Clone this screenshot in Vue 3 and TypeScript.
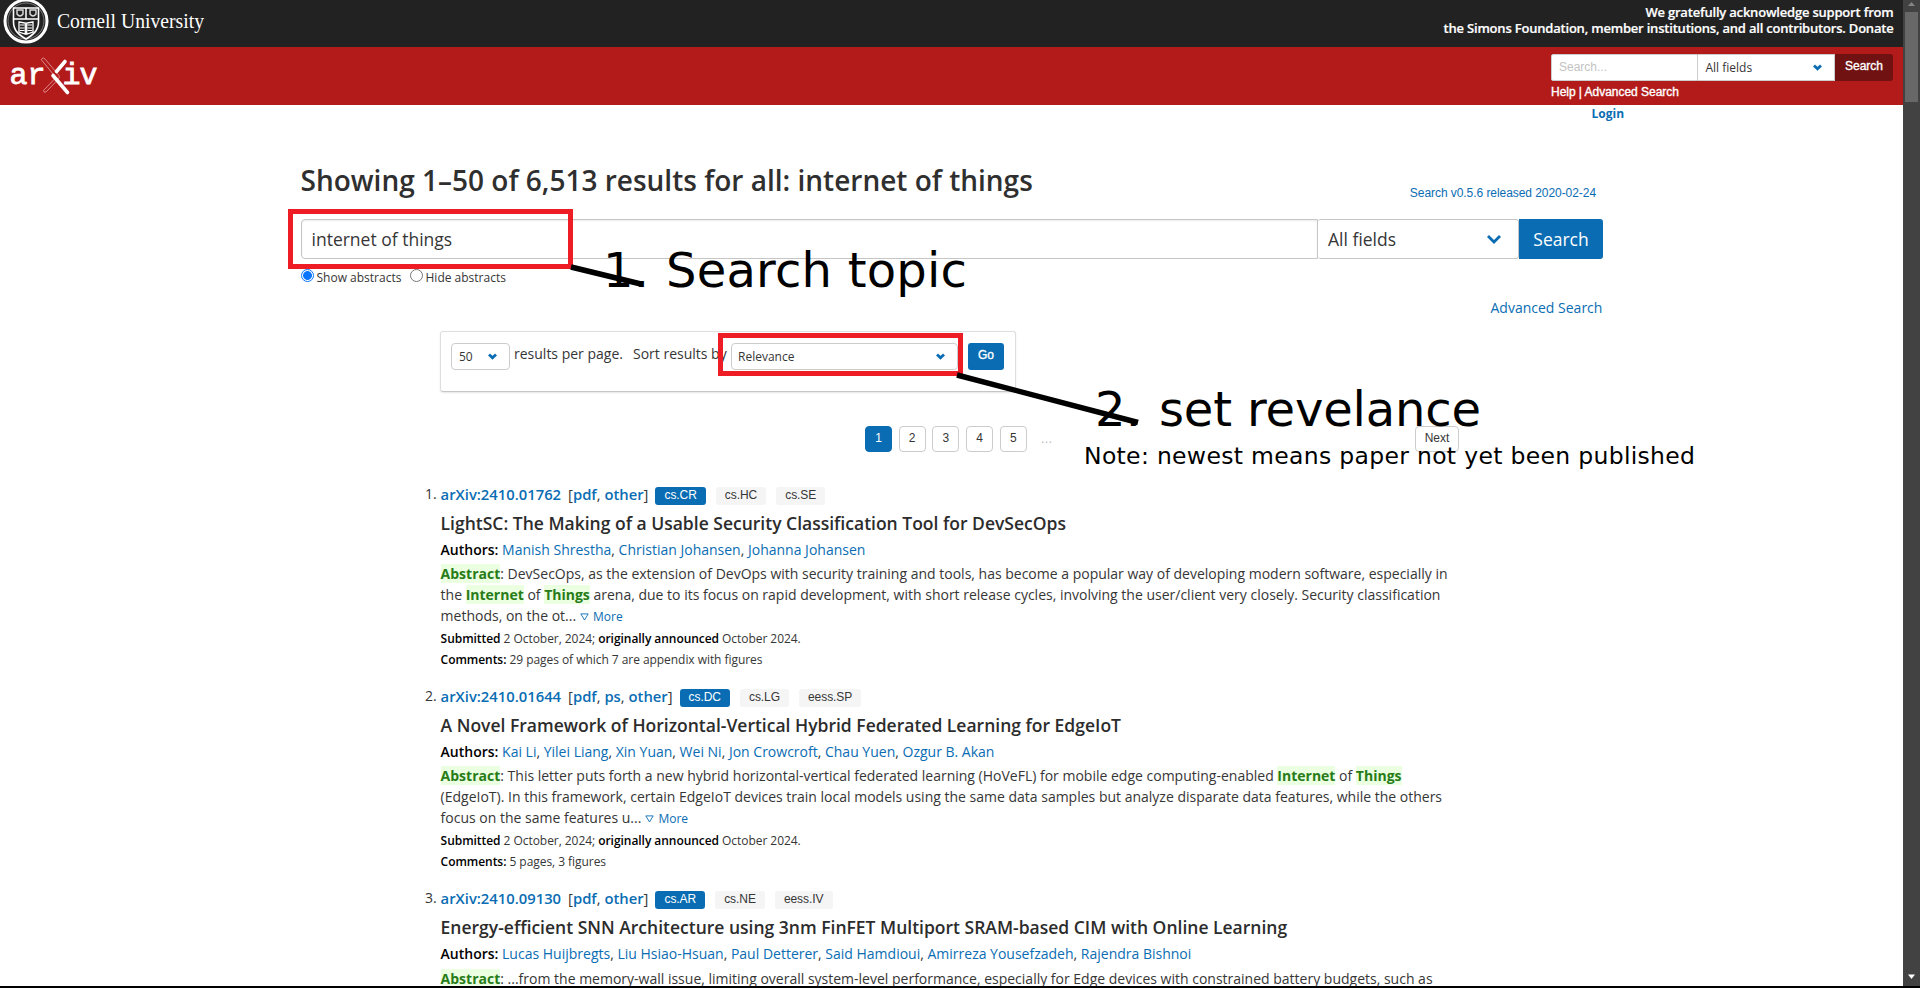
<script setup lang="ts">
interface Paper {
  n: number
  id: string
  links: string[]
  tags: string[]
  title: string
  authors: string[]
  abstract: string[]
  submitted: string
  comments: string
}

const papers: Paper[] = [
  {
    n: 1,
    id: 'arXiv:2410.01762',
    links: ['pdf', 'other'],
    tags: ['cs.CR', 'cs.HC', 'cs.SE'],
    title: 'LightSC: The Making of a Usable Security Classification Tool for DevSecOps',
    authors: ['Manish Shrestha', 'Christian Johansen', 'Johanna Johansen'],
    abstract: [
      'DevSecOps, as the extension of DevOps with security training and tools, has become a popular way of developing modern software, especially in',
      'the *Internet* of *Things* arena, due to its focus on rapid development, with short release cycles, involving the user/client very closely. Security classification',
      'methods, on the ot...',
    ],
    submitted: '2 October, 2024;',
    comments: '29 pages of which 7 are appendix with figures',
  },
  {
    n: 2,
    id: 'arXiv:2410.01644',
    links: ['pdf', 'ps', 'other'],
    tags: ['cs.DC', 'cs.LG', 'eess.SP'],
    title: 'A Novel Framework of Horizontal-Vertical Hybrid Federated Learning for EdgeIoT',
    authors: ['Kai Li', 'Yilei Liang', 'Xin Yuan', 'Wei Ni', 'Jon Crowcroft', 'Chau Yuen', 'Ozgur B. Akan'],
    abstract: [
      'This letter puts forth a new hybrid horizontal-vertical federated learning (HoVeFL) for mobile edge computing-enabled *Internet* of *Things*',
      '(EdgeIoT). In this framework, certain EdgeIoT devices train local models using the same data samples but analyze disparate data features, while the others',
      'focus on the same features u...',
    ],
    submitted: '2 October, 2024;',
    comments: '5 pages, 3 figures',
  },
  {
    n: 3,
    id: 'arXiv:2410.09130',
    links: ['pdf', 'other'],
    tags: ['cs.AR', 'cs.NE', 'eess.IV'],
    title: 'Energy-efficient SNN Architecture using 3nm FinFET Multiport SRAM-based CIM with Online Learning',
    authors: ['Lucas Huijbregts', 'Liu Hsiao-Hsuan', 'Paul Detterer', 'Said Hamdioui', 'Amirreza Yousefzadeh', 'Rajendra Bishnoi'],
    abstract: [
      '...from the memory-wall issue, limiting overall system-level performance, especially for Edge devices with constrained battery budgets, such as',
    ],
    submitted: '',
    comments: '',
  },
]

const pages = ['1', '2', '3', '4', '5']

/* Splits a line on asterisks; odd parts are search hits. */
const parts = (line: string): string[] => line.split('*')
</script>

<template>
  <div class="screen">
    <main class="page">
      <header class="top">
        <div class="cornell">
          <svg class="seal" width="46" height="45" viewBox="0 0 46 45">
            <circle cx="23" cy="21" r="21" fill="none" stroke="#fff" stroke-width="3" />
            <circle cx="23" cy="21" r="18" fill="none" stroke="#777" stroke-width="1" />
            <path d="M10.500 8h25v14c0 9-6 13-12.500 17C16.500 35 10.500 31 10.500 22z" fill="none" stroke="#fff" stroke-width="1.600" />
            <path d="M10.500 19h25M23 8v11" stroke="#fff" stroke-width="1.500" fill="none" />
            <path d="M14 10h6v4q-3 4-6 0zM27 10h6v4q-3 4-6 0z" fill="none" stroke="#ddd" stroke-width="1.400" />
            <path d="M16 22l6.300 1V34l-6.300-2zM30 22l-6.300 1V34l6.300-2z" fill="none" stroke="#fff" stroke-width="1.300" />
            <path d="M17 25h4.500M17 28h4.500M17 30.500h4.500M24.500 25h4.500M24.500 28h4.500M24.500 30.500h4.500" stroke="#fff" stroke-width="1.200" />
          </svg>
          <svg class="wordmark" width="150" height="34" viewBox="0 0 150 34">
            <text x="0" y="24" textLength="147" lengthAdjust="spacingAndGlyphs">Cornell University</text>
          </svg>
        </div>
        <p class="support">We gratefully acknowledge support from<br />the Simons Foundation, member institutions, and all contributors. Donate</p>
      </header>

      <div class="brand">
        <svg class="logo" width="90" height="44" viewBox="0 0 90 44">
          <text x="-.5" y="29" textLength="36" class="mono">ar</text>
          <text x="52.500" y="29" textLength="35" class="mono">iv</text>
          <path d="M32 3.500q1.500-1.500 3 .5L49 20.500q1 2-1 4L36 37q-2.500 1-2.500-1.500L46 22.500 31.500 5q-.5-1 .5-1.500z" fill="none" stroke="#e9a3a3" stroke-width=".8" />
          <path d="M55 6.500L46.500 16.500M43 20.500L57.500 37.500" fill="none" stroke="#fff" stroke-width="3.600" stroke-linecap="round" />
        </svg>
        <div class="mini">
          <div class="mini-row">
            <div class="mini-input">Search...</div>
            <div class="mini-select">All fields
              <svg width="9" height="7" viewBox="0 0 9 7"><path d="M1 1.500l3.500 3.300L8 1.500" /></svg>
            </div>
            <div class="mini-btn">Search</div>
          </div>
          <p class="mini-help">Help | Advanced Search</p>
        </div>
      </div>
      <div class="login">Login</div>

      <section class="search">
        <div class="heading">
          <h1>Showing 1–50 of 6,513 results for all: internet of things</h1>
          <span class="version">Search v0.5.6 released 2020-02-24</span>
        </div>
        <div class="bar">
          <div class="query">internet of things</div>
          <div class="fields">All fields
            <svg width="16" height="12" viewBox="0 0 16 12"><path d="M2 3l6 6 6-6" /></svg>
          </div>
          <div class="go-big">Search</div>
        </div>
        <div class="radios">
          <i class="radio on"></i><span class="lab1">Show abstracts</span>
          <i class="radio"></i><span class="lab2">Hide abstracts</span>
        </div>
        <div class="advanced">Advanced Search</div>
      </section>

      <section class="content">
        <div class="options">
          <div class="sel small">50<svg width="9" height="7" viewBox="0 0 9 7"><path d="M1 1.500l3.500 3.300L8 1.500" /></svg></div>
          <span class="per">results per page.</span>
          <span class="sort">Sort results by</span>
          <div class="sel wide">Relevance<svg width="9" height="7" viewBox="0 0 9 7"><path d="M1 1.500l3.500 3.300L8 1.500" /></svg></div>
          <div class="go">Go</div>
        </div>

        <nav class="pager">
          <span v-for="p in pages" :key="p" class="pg" :class="{ cur: p === '1' }">{{ p }}</span>
          <span class="dots">…</span>
          <span class="pg next">Next</span>
        </nav>

        <article v-for="p in papers" :key="p.n" class="paper">
          <div class="idline">
            <span class="num">{{ p.n }}.</span>
            <span class="id">{{ p.id }}</span>
            <span class="links">[<template v-for="(l, i) in p.links" :key="l"><b>{{ l }}</b><template v-if="i < p.links.length - 1">, </template></template>]</span>
            <span v-for="(t, i) in p.tags" :key="t" class="tag" :class="{ main: i === 0 }">{{ t }}</span>
          </div>
          <h2>{{ p.title }}</h2>
          <p class="authors"><strong>Authors:</strong> <template v-for="(a, i) in p.authors" :key="a"><a>{{ a }}</a><template v-if="i < p.authors.length - 1">, </template></template></p>
          <div class="abstract">
            <p v-for="(line, i) in p.abstract" :key="i"><template v-if="i === 0"><mark>Abstract</mark>: </template><template v-for="(s, k) in parts(line)" :key="k"><mark v-if="k % 2">{{ s }}</mark><template v-else>{{ s }}</template></template><span v-if="i === 2" class="more"><svg width="9" height="8" viewBox="0 0 9 8"><path d="M.8.900h7.400L4.500 7z" /></svg>More</span></p>
          </div>
          <template v-if="p.submitted">
            <p class="meta"><strong>Submitted</strong> {{ p.submitted }} <strong>originally announced</strong> October 2024.</p>
            <p class="meta"><strong>Comments:</strong> {{ p.comments }}</p>
          </template>
        </article>
      </section>
    </main>

    <aside class="scrollbar">
      <svg width="17" height="12" viewBox="0 0 17 12"><path d="M5 6l3.500-4L12 6z" fill="#858585" /></svg>
      <div class="thumb"></div>
      <svg class="down" width="17" height="12" viewBox="0 0 17 12"><path d="M5 3.500h7L8.500 8z" fill="#fff" /></svg>
    </aside>

    <svg class="notes" width="1920" height="988" viewBox="0 0 1920 988">
      <g fill="none" stroke="#ee1c25" stroke-width="5">
        <rect x="290.500" y="211.500" width="280" height="55" />
        <rect x="720.500" y="335.500" width="240" height="38" />
      </g>
      <path d="M571 267L643 284.500M957 375L1138 422.500" stroke="#000" stroke-width="5.500" />
      <g class="ann">
        <text x="603" y="287" font-size="48" textLength="46">1.</text>
        <text x="666" y="287" font-size="48" textLength="301">Search topic</text>
        <text x="1095" y="426" font-size="48" textLength="46">2.</text>
        <text x="1159" y="426" font-size="48" textLength="322">set revelance</text>
        <text x="1084" y="463.500" font-size="23.500" textLength="611">Note: newest means paper not yet been published</text>
      </g>
    </svg>
    <div class="bottom-edge"></div>
  </div>
</template>

<style>
html, body { margin: 0; overflow: hidden; background: #fff; }
</style>

<style scoped>
.screen { position: relative; display: flex; width: 1920px; height: 988px; overflow: hidden; font-family: "Open Sans", "Liberation Sans", sans-serif; font-size: 14px; color: #363636; background: #fff; }
.screen * { box-sizing: border-box; }
p, h1, h2 { margin: 0; white-space: nowrap; }
.page { width: 1903px; height: 988px; overflow: hidden; }

.top { display: flex; justify-content: space-between; height: 47px; background: #222; }
.cornell { display: flex; padding-left: 3px; }
.wordmark { margin: 4px 0 0 7.500px; }
.wordmark text { font-family: "Liberation Serif", serif; font-size: 20px; fill: #fff; }
.support { padding: 4px 9.500px 0 0; text-align: right; font-size: 13px; line-height: 16px; font-weight: 600; letter-spacing: -.2px; color: #fff; -webkit-text-stroke: .2px #fff; }

.brand { display: flex; justify-content: space-between; height: 58px; padding: 7px 10px 0 9px; background: #b31b1b; }
.mono { font-family: "Liberation Mono", monospace; font-size: 30px; fill: #fff; stroke: #fff; stroke-width: .800px; }
.logo { margin: 1px 0 0 1px; }
.mini { width: 342px; }
.mini-row { display: flex; height: 27px; font-size: 12px; line-height: 25px; }
.mini-input { width: 147px; padding-left: 7px; border: 1px solid #ccc; background: #fff; color: #c3c3c3; font-family: "Liberation Sans", sans-serif; border-radius: 2px 0 0 2px; }
.mini-select { display: flex; align-items: center; justify-content: space-between; width: 137px; padding: 0 12px 0 7.500px; border: 1px solid #ccc; border-left: 0; background: #fff; }
.mini-btn { flex: 1; padding-left: 10px; line-height: 24px; background: #701112; color: #fff; font-family: "Liberation Sans", sans-serif; -webkit-text-stroke: .35px #fff; border-radius: 0 3px 3px 0; }
.mini-help { padding-top: 3px; font: 12px/16px "Liberation Sans", sans-serif; letter-spacing: -.03px; color: #fff; -webkit-text-stroke: .35px #fff; }
.mini-select path, .sel path { fill: none; stroke: #0a6db3; stroke-width: 2.800; }
.login { height: 18px; padding-left: 1591.500px; font-size: 12px; line-height: 18px; font-weight: 700; color: #0a6db3; }

.search { width: 1302px; margin-left: 301px; padding-top: 36px; }
.heading { display: flex; justify-content: space-between; height: 60px; }
h1 { margin-left: -.5px; font-size: 28px; line-height: 43px; font-weight: 600; color: #2f2f2f; }
.version { padding: 26px 7px 0 0; font: 12px/16px "Liberation Sans", sans-serif; letter-spacing: -.06px; color: #0a6db3; }
.bar { display: flex; height: 40px; font-size: 17.500px; line-height: 38px; }
.query { width: 1017px; padding-left: 9.500px; border: 1px solid #c6c6c6; border-radius: 4px 0 0 4px; box-shadow: inset 0 1px 2px rgba(10,10,10,.08); }
.fields { display: flex; align-items: center; justify-content: space-between; width: 201px; padding: 0 16px 0 10px; border: 1px solid #c6c6c6; border-left: 0; border-radius: 3px; }
.fields path { fill: none; stroke: #0a6db3; stroke-width: 2.800; }
.go-big { flex: 1; text-align: center; line-height: 40px; color: #fff; background: #0a6db3; border-radius: 0 3px 3px 0; }
.radios { display: flex; height: 33px; padding-top: 10px; font-size: 12px; line-height: 18px; }
.radio { width: 13px; height: 13px; border: 1px solid #767676; border-radius: 50%; margin-right: 3px; }
.radio.on { border-color: #0a75ff; background: radial-gradient(circle, #0a75ff 0 4px, #fff 4.800px); }
.lab1 { width: 93px; margin-left: -.5px; margin-right: .5px; }
.lab2 { margin-left: -.5px; }
.advanced { height: 39px; padding: 6px .6px 0 0; text-align: right; line-height: 20px; color: #0a6db3; }

.content { width: 1023px; margin-left: 440px; }
.options { display: flex; width: 576px; height: 61px; padding: 10px; border: 1px solid #dedede; border-bottom-color: #c6c6c6; border-radius: 3px; box-shadow: 0 1px 2px rgba(0,0,0,.1); line-height: 23px; }
.sel { display: flex; align-items: center; justify-content: space-between; height: 27px; margin-top: 1px; border: 1px solid #ccc; border-radius: 4px; font-size: 12px; }
.small { width: 59px; padding: 0 12px 0 7px; }
.wide { width: 227px; padding: 0 12px 0 6px; }
.per { width: 123px; padding-left: 4px; white-space: nowrap; }
.sort { width: 98px; white-space: nowrap; }
.go { width: 36px; height: 27px; margin: 1px 0 0 10px; text-align: center; border-radius: 3px; background: #0a6db3; color: #fff; font: 12px/24px "Liberation Sans", sans-serif; -webkit-text-stroke: .35px #fff; }
.pager { display: flex; width: 1019px; height: 59px; margin-top: 34px; padding-left: 425px; font: 12px/22px "Liberation Sans", sans-serif; }
.pg { width: 27px; height: 26px; margin-right: 6.700px; border: 1px solid #ccc; border-radius: 4px; text-align: center; }
.pg.cur { border-color: #0a6db3; background: #0a6db3; color: #fff; }
.dots { padding: 2px 0 0 7px; color: #b5b5b5; }
.pg.next { width: 44px; margin: 0 0 0 auto; }

.paper { height: 202.200px; padding-left: .6px; }
.idline { display: flex; height: 23px; margin-left: -15.500px; font-size: 14.800px; line-height: 18px; white-space: nowrap; }
.num { width: 15.500px; font-size: 14px; }
.id { width: 127.500px; font-weight: 600; color: #0a6db3; }
.links { margin-right: 7px; }
.links b { font-weight: 600; color: #0a6db3; }
.tag { height: 18px; margin: 2px 10px 0 0; padding: 0 9px; border-radius: 3px; background: #f5f5f5; font: 12px/16px "Liberation Sans", sans-serif; letter-spacing: -.06px; }
.tag.main { background: #0a6db3; color: #fff; }
h2 { height: 31px; font-size: 17.500px; line-height: 30px; font-weight: 600; color: #2c2c2c; }
.authors { height: 24.300px; line-height: 22px; }
strong { font-weight: 600; color: #000; }
a, .more { color: #0a6db3; }
.abstract { line-height: 21px; padding-bottom: 1.600px; }
.abstract p { height: 21px; }
mark { background: #ebffe1; color: #277c17; font-weight: 700; }
.more { margin-left: 4px; font-size: 12px; }
.more svg { margin-right: 4px; }
.more path { fill: none; stroke: #0a6db3; stroke-width: .9; }
.meta { height: 21px; font-size: 12px; line-height: 22px; letter-spacing: -.05px; }

.scrollbar { display: flex; flex-direction: column; width: 17px; height: 988px; background: #424242; }
.thumb { width: 13px; height: 90px; margin-left: 2px; background: #686868; }
.down { margin-top: auto; margin-bottom: 5px; }
.notes { position: absolute; left: 0; top: 0; }
.ann text { font-family: "DejaVu Sans", sans-serif; fill: #000; }
.bottom-edge { position: absolute; left: 0; bottom: 0; width: 1920px; height: 2px; background: #000; }
</style>
